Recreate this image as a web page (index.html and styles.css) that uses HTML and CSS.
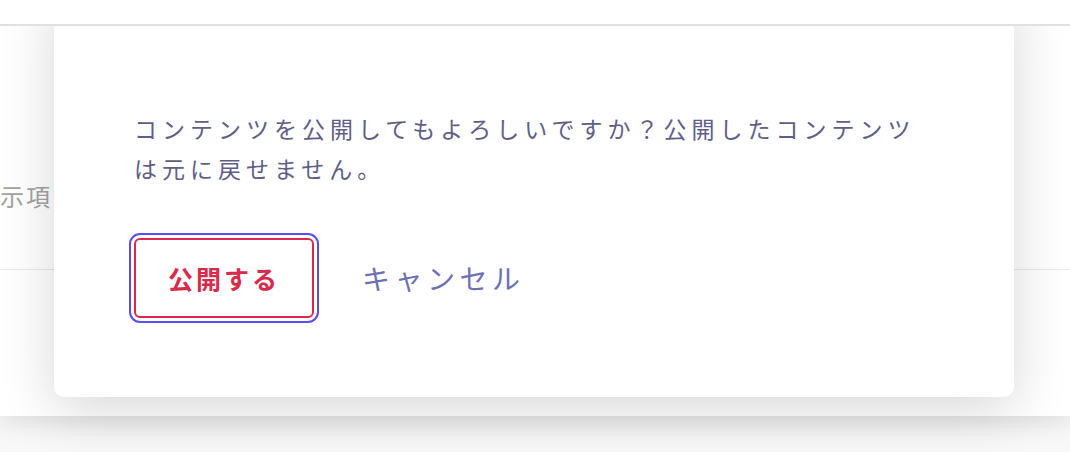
FILE: index.html
```html
<!DOCTYPE html>
<html lang="ja">
<head>
<meta charset="utf-8">
<link rel="stylesheet" href="styles.css">
</head>
<body>
<div class="page">
  <header class="header"></header>
  <main class="panel">
    <div class="row">
      <span class="label">示項目</span>
    </div>
  </main>
  <div class="modal" role="dialog">
    <p class="message">コンテンツを公開してもよろしいですか？公開したコンテンツは元に戻せません。</p>
    <div class="actions">
      <button class="btn-publish">公開する</button>
      <button class="btn-cancel">キャンセル</button>
    </div>
  </div>
</div>
</body>
</html>
```
FILE: styles.css
```css
html, body {
  margin: 0;
  padding: 0;
}
body {
  background: #f8f8f8;
  font-family: "Noto Sans CJK JP", "Noto Sans", sans-serif;
  width: 1070px;
  height: 452px;
  overflow: hidden;
}
.page {
  position: relative;
  height: 452px;
}
.header {
  position: relative;
  z-index: 3;
  height: 24px;
  background: #fff;
  border-bottom: 2px solid #e1e1e1;
}
.panel {
  background: #fff;
  height: 390px;
  box-shadow: 0 8px 22px rgba(0, 0, 0, 0.1);
}
.row {
  box-sizing: border-box;
  height: 244px;
  padding-top: 154px;
  border-bottom: 1px solid #e9e9f0;
}
.label {
  display: block;
  font-size: 24px;
  line-height: 32px;
  letter-spacing: 2px;
  color: #a3a3a3;
}
.modal {
  position: absolute;
  z-index: 2;
  left: 54px;
  top: -10px;
  width: 960px;
  box-sizing: border-box;
  padding: 118px 80px 79px;
  background: #fff;
  border-radius: 10px;
  box-shadow: 0 12px 55px rgba(0, 0, 0, 0.16);
}
.message {
  margin: 0;
  max-width: 795px;
  font-size: 23px;
  line-height: 40px;
  letter-spacing: 5px;
  color: #5e5e86;
}
.actions {
  display: flex;
  align-items: center;
  margin-top: 50px;
}
.btn-publish {
  box-sizing: border-box;
  width: 180px;
  height: 80px;
  padding: 0;
  background: #fff;
  border: 2px solid #d92a4c;
  border-radius: 6px;
  outline: 2px solid #5a4cf6;
  outline-offset: 3px;
  font-family: inherit;
  font-size: 25px;
  font-weight: 700;
  letter-spacing: 3px;
  color: #d92a4c;
}
.btn-cancel {
  margin-left: 48px;
  padding: 0;
  background: none;
  border: none;
  font-family: inherit;
  font-size: 28px;
  letter-spacing: 4.5px;
  color: #6e6fb4;
}
```
